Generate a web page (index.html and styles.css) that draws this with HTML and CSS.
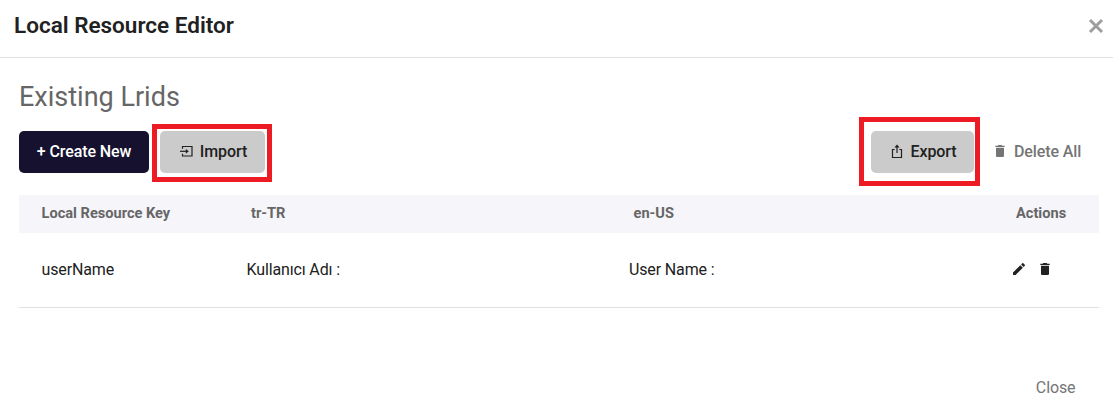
FILE: index.html
```html
<!DOCTYPE html>
<html lang="en">
<head>
<meta charset="utf-8">
<title>Local Resource Editor</title>
<link rel="stylesheet" href="styles.css">
</head>
<body>
<div class="dialog">
  <header class="dialog-header">
    <h1 class="dialog-title">Local Resource Editor</h1>
    <svg class="dismiss" viewBox="0 0 16 16"><path d="M2 2 14 14M14 2 2 14"/></svg>
  </header>
  <main class="content">
    <h2 class="subtitle">Existing Lrids</h2>
    <div class="toolbar">
      <button class="btn btn-create">+ Create New</button>
      <div class="marked marked-import">
        <button class="btn btn-import">
          <svg class="icon-import" viewBox="0 0 13 12"><path d="M2.500 3.800V1.500H12v9.500H2.500V8.700"/><path d="M0 6.300h7"/><path class="solid" d="M5.800 3.900 8.800 6.300 5.800 8.700z"/></svg>
          <span>Import</span>
        </button>
      </div>
      <div class="marked marked-export">
        <button class="btn btn-export">
          <svg class="icon-export" viewBox="0 0 12 15"><path d="M3.600 5.500H1.500v8h9v-8H8.400"/><path d="M6 9V2"/><path class="solid" d="M3.400 3.500 6 .6l2.600 2.900z"/></svg>
          <span>Export</span>
        </button>
      </div>
      <button class="btn-delete">
        <svg class="icon-trash" viewBox="5 3 14 18"><path d="M6 19c0 1.100.9 2 2 2h8c1.100 0 2-.9 2-2V7H6v12zM19 4h-3.500l-1-1h-5l-1 1H5v2h14V4z"/></svg>
        <span>Delete All</span>
      </button>
    </div>
    <div class="table">
      <div class="row row-head"><span>Local Resource Key</span><span class="head-locale">tr-TR</span><span class="head-locale">en-US</span><span class="head-actions">Actions</span></div>
      <div class="row row-body"><span>userName</span><span>Kullanıcı Adı :</span><span>User Name :</span>
        <span class="actions">
          <svg class="icon-edit" viewBox="3 3 18 18"><path d="M3 17.250V21h3.750L17.810 9.940l-3.750-3.750L3 17.250zM20.710 7.040c.39-.39.39-1.020 0-1.410l-2.340-2.340a1 1 0 0 0-1.410 0l-1.830 1.830 3.750 3.750 1.830-1.830z"/></svg>
          <svg class="icon-trash" viewBox="5 3 14 18"><path d="M6 19c0 1.100.9 2 2 2h8c1.100 0 2-.9 2-2V7H6v12zM19 4h-3.500l-1-1h-5l-1 1H5v2h14V4z"/></svg>
        </span>
      </div>
    </div>
  </main>
  <footer class="dialog-footer"><button class="btn-close">Close</button></footer>
</div>
</body>
</html>
```

FILE: styles.css
```css
* { box-sizing: border-box; }
body { margin: 0; background: #fff; font-family: Roboto, sans-serif; color: #212121; }
button { border: 0; background: none; margin: 0; padding: 0; font: 500 16px/20px Roboto, sans-serif; letter-spacing: -.1px; color: inherit; white-space: nowrap; }
svg { display: block; flex: none; }
.dialog { width: 1113px; height: 410px; overflow: hidden; }
.dialog-header { height: 58px; border-bottom: 1px solid #e0e0e0; display: flex; justify-content: space-between; align-items: flex-start; padding: 11px 9px 0 14px; }
.dialog-title { margin: 0; font-size: 22.500px; line-height: 28px; font-weight: 600; }
.dismiss { width: 16px; height: 16px; margin-top: 7px; fill: none; stroke: #9e9e9e; stroke-width: 3; }
.content { padding: 22px 14px 0 19px; }
.subtitle { margin: 0; height: 37px; font-size: 27px; line-height: 34px; font-weight: 400; color: #666; }
.toolbar { display: flex; align-items: flex-start; height: 78px; }
.btn { display: flex; align-items: center; justify-content: center; height: 42px; border-radius: 5px; background: #cbcbcb; }
.btn-create { width: 130px; margin-top: 14px; background: #15112f; color: #fff; }
.marked { border: 5px solid #ed1c24; }
.marked-import { width: 120px; height: 58px; margin: 7px 0 0 3px; padding: 2px 2px 0 3px; }
.marked-export { width: 121px; height: 69px; margin-left: auto; padding: 9px 1px 0 7px; }
.btn-import { width: 105px; gap: 7px; padding-left: 2px; }
.btn-export { width: 103px; gap: 8px; padding-left: 2px; }
.icon-import, .icon-export { fill: none; stroke: #212121; stroke-width: 1.2; }
.icon-import { width: 13px; height: 12px; margin-bottom: 2px; }
.icon-export { width: 12px; height: 15px; margin-bottom: 1px; }
.solid { fill: #212121; stroke: none; }
.btn-delete { display: flex; align-items: center; gap: 9px; width: 86px; height: 42px; margin: 14px 18px 0 15px; color: #757575; }
.icon-trash { width: 10px; height: 12px; fill: currentColor; }
.btn-delete .icon-trash { margin-bottom: 2px; }
.row { display: grid; grid-template-columns: 205px 382.500px 387px 1fr; align-items: center; padding-left: 22.500px; }
.row-head { height: 38px; background: #f5f5fa; font-size: 14.600px; font-weight: 700; color: #666; padding-bottom: 2px; }
.head-locale { padding-left: 4.500px; }
.row-body { height: 75px; border-bottom: 1px solid #e0e0e0; font-size: 16px; letter-spacing: -.14px; padding-bottom: 1px; }
.actions { display: flex; align-items: center; gap: 14.500px; margin-top: -1px; }
.icon-edit { width: 12px; height: 12px; fill: currentColor; margin-left: -3px; }
.dialog-footer { display: flex; justify-content: flex-end; padding: 70px 37.500px 0 0; }
.btn-close { font-weight: 400; color: #757575; }
```
